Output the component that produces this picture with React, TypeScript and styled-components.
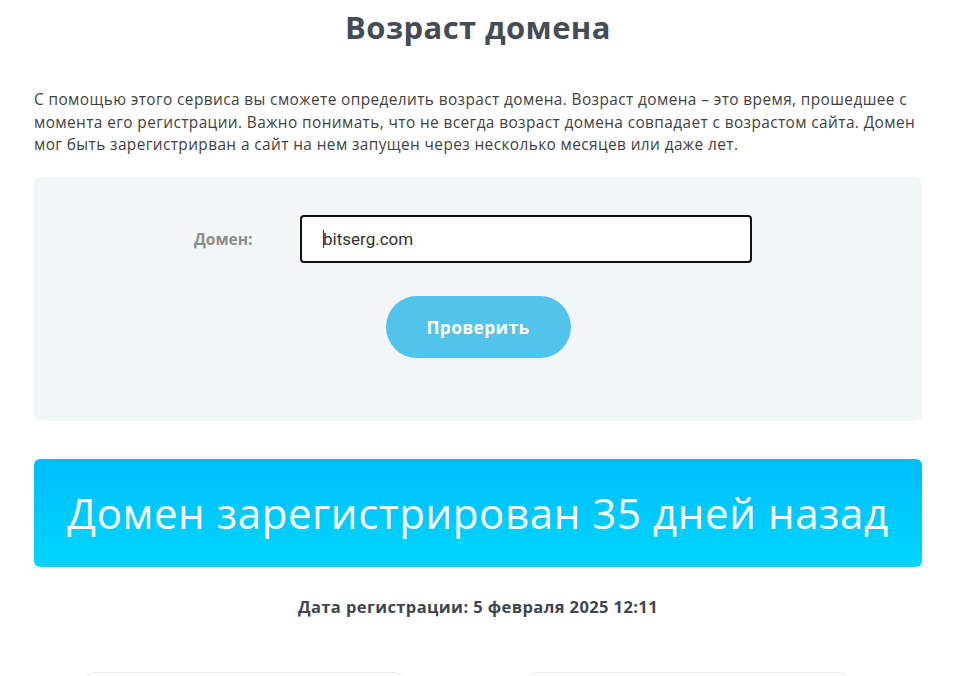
import styled, { createGlobalStyle } from 'styled-components';

const GlobalStyle = createGlobalStyle`
  html, body {
    margin: 0;
    padding: 0;
    background: #ffffff;
    overflow: hidden;
  }
  body {
    font-family: "Open Sans", "Noto Sans", sans-serif;
    color: #444;
  }
`;

const Page = styled.div`
  width: 974px;
  height: 676px;
  box-sizing: border-box;
  padding: 6px 52px 0 34px;
  overflow: hidden;
`;

const Title = styled.h1`
  margin: 0;
  text-align: center;
  font-family: "Open Sans", sans-serif;
  font-size: 31px;
  font-weight: 700;
  letter-spacing: 0.4px;
  color: #464c56;
  line-height: 42px;
`;

const Intro = styled.p`
  margin: 41px 0 0;
  font-family: "Open Sans", sans-serif;
  font-size: 15.4px;
  line-height: 22.6px;
  letter-spacing: 0.4px;
  font-weight: 500;
  color: #424242;
`;

const FormBox = styled.section`
  margin-top: 20px;
  height: 244px;
  background: #f3f6f7;
  border-radius: 7px;
  display: flex;
  flex-direction: column;
  align-items: center;
  box-sizing: border-box;
  padding-top: 38px;
`;

const FieldRow = styled.div`
  display: flex;
  align-items: center;
  gap: 42px;
  margin-left: -10px;
`;

const Label = styled.label`
  font-family: "Open Sans", sans-serif;
  font-size: 15.5px;
  font-weight: 700;
  color: #8d8d8d;
  width: 64px;
`;

const Input = styled.div`
  width: 452px;
  height: 48px;
  box-sizing: border-box;
  border: 2px solid #111;
  border-radius: 4px;
  background: #fff;
  display: flex;
  align-items: center;
  padding-left: 21px;
  font-family: "Roboto", sans-serif;
  font-size: 17px;
  color: #333;
`;

const Caret = styled.span`
  display: inline-block;
  width: 1px;
  height: 18px;
  background: #333;
  margin-right: -1px;
`;

const CheckButton = styled.button`
  margin-top: 33px;
  width: 185px;
  height: 62px;
  border: none;
  border-radius: 31px;
  background: #52c3ea;
  color: #fff;
  font-family: "Open Sans", sans-serif;
  font-size: 17.5px;
  font-weight: 700;
  letter-spacing: 0.3px;
  cursor: pointer;
`;

const Banner = styled.div`
  margin-top: 38px;
  height: 108px;
  border-radius: 6px;
  background: linear-gradient(180deg, #00bdfe 0%, #00d5fe 100%);
  display: flex;
  align-items: center;
  justify-content: center;
  color: #fff;
  font-family: "Open Sans", sans-serif;
  font-size: 42px;
  font-weight: 400;
  letter-spacing: 0.6px;
`;

const DateLine = styled.div`
  margin-top: 28px;
  text-align: center;
  font-family: "Open Sans", sans-serif;
  font-size: 16.5px;
  line-height: 24px;
  font-weight: 700;
  letter-spacing: 0.4px;
  color: #3e4550;
`;

const Cards = styled.div`
  margin-top: 53px;
  display: grid;
  grid-template-columns: 330px 330px;
  column-gap: 113px;
  padding-left: 46px;
`;

const Card = styled.div`
  height: 60px;
  border: 1px solid #ececec;
  border-radius: 16px;
  background: #fff;
`;

export default function App() {
  return (
    <>
      <GlobalStyle />
      <Page>
        <Title>Возраст домена</Title>
        <Intro>
          С помощью этого сервиса вы сможете определить возраст домена. Возраст домена – это время,
          прошедшее с момента его регистрации. Важно понимать, что не всегда возраст домена совпадает с
          возрастом сайта. Домен мог быть зарегистрирван а сайт на нем запущен через несколько месяцев или
          даже лет.
        </Intro>
        <FormBox>
          <FieldRow>
            <Label>Домен:</Label>
            <Input>
              <Caret />
              bitserg.com
            </Input>
          </FieldRow>
          <CheckButton>Проверить</CheckButton>
        </FormBox>
        <Banner>Домен зарегистрирован 35 дней назад</Banner>
        <DateLine>Дата регистрации: 5 февраля 2025 12:11</DateLine>
        <Cards>
          <Card />
          <Card />
        </Cards>
      </Page>
    </>
  );
}
